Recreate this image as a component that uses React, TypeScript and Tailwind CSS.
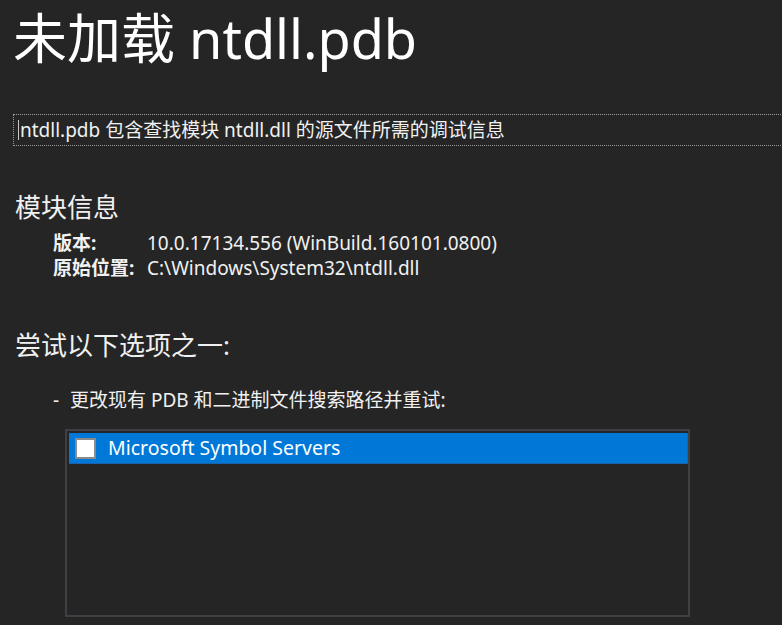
import React from "react";

const font = { fontFamily: '"Noto Sans", "Noto Sans CJK SC", sans-serif' };

function InfoRow({ label, value }: { label: string; value: string }) {
  return (
    <div className="flex h-[25px] items-center text-[19px] leading-[25px]">
      <div className="w-[94px] shrink-0 font-bold">{label}</div>
      <div>{value}</div>
    </div>
  );
}

function SymbolList() {
  return (
    <div className="ml-[65px] h-[188px] w-[625px] border-2 border-[#3f3f46] py-[2px] pl-[2px]">
      <div className="flex h-[31px] items-center border-b border-r border-[#1a62ad] bg-[#0078d7] pl-[6px]">
        <span className="h-[21px] w-[21px] border-2 border-[#8a8a8a] bg-white" />
        <span className="ml-[12px] text-[19.5px] text-white">Microsoft Symbol Servers</span>
      </div>
    </div>
  );
}

export default function App() {
  return (
    <div className="h-[625px] w-[782px] overflow-hidden bg-[#252526] text-[#f1f1f1]" style={font}>
      <div className="flex flex-col">
        <h1 className="ml-[13px] mt-[12px] h-[52px] text-[54px] font-normal leading-[52px] text-white">
          未加载 ntdll.pdb
        </h1>

        <div className="ml-[13px] mt-[50px] flex h-[32px] w-[800px] items-center border border-dotted border-[#9a9a9a] pl-[4px] text-[19px]">
          <span className="mr-[1px] h-[20px] w-px bg-[#c8c8c8]" />
          ntdll.pdb 包含查找模块 ntdll.dll 的源文件所需的调试信息
        </div>

        <h2 className="ml-[15px] mt-[46px] h-[30px] text-[26px] font-normal leading-[30px]">模块信息</h2>
        <div className="ml-[53px] mt-[9px]">
          <InfoRow label="版本:" value="10.0.17134.556 (WinBuild.160101.0800)" />
          <InfoRow label="原始位置:" value="C:\Windows\System32\ntdll.dll" />
        </div>

        <h2 className="ml-[15px] mt-[49px] h-[30px] text-[26px] font-normal leading-[30px]">尝试以下选项之一:</h2>

        <div className="ml-[53px] mt-[28px] flex h-[25px] items-center text-[19px] leading-[25px]">
          <span className="w-[17px]">-</span>
          <span>更改现有 PDB 和二进制文件搜索路径并重试:</span>
        </div>

        <div className="mt-[16px]">
          <SymbolList />
        </div>
      </div>
    </div>
  );
}
